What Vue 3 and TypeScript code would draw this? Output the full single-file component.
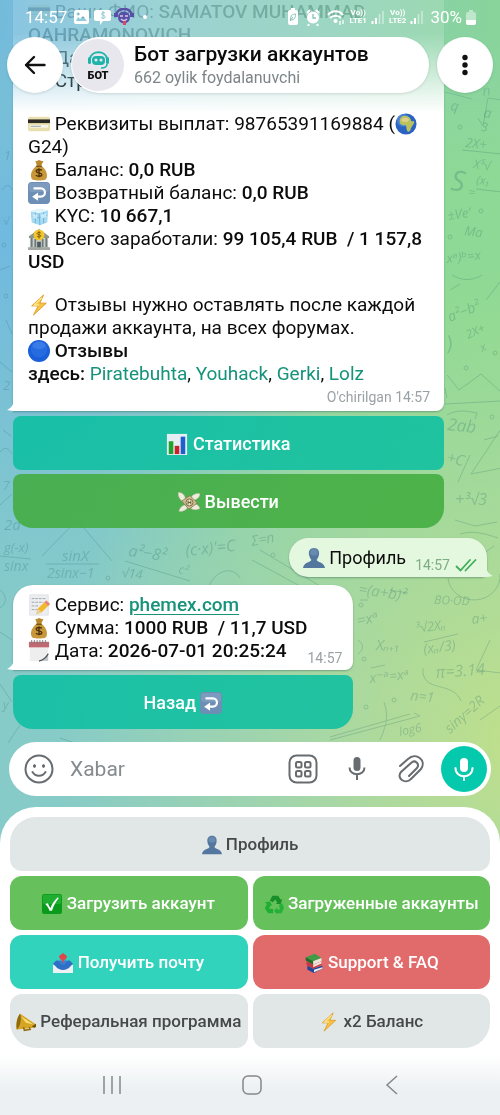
<script setup lang="ts">
import { ref } from 'vue'

interface KeyButton {
  icon: string
  label: string
  tone: 'plain' | 'green' | 'teal' | 'red'
  wide?: boolean
}

interface Doodle {
  x: number
  y: number
  r: number
  s: number
  t: string
}

const draft = ref('')

const keys: KeyButton[] = [
  { icon: 'person', label: 'Профиль', tone: 'plain', wide: true },
  { icon: 'check', label: 'Загрузить аккаунт', tone: 'green' },
  { icon: 'recycle', label: 'Загруженные аккаунты', tone: 'green' },
  { icon: 'outbox', label: 'Получить почту', tone: 'teal' },
  { icon: 'books', label: 'Support & FAQ', tone: 'red' },
  { icon: 'horn', label: 'Реферальная программа', tone: 'plain' },
  { icon: 'bolt', label: 'x2 Баланс', tone: 'plain' },
]

const reviews: string[] = ['Piratebuhta', 'Youhack', 'Gerki', 'Lolz']

const doodles: Doodle[] = [
  { x: 483, y: 96, r: -8, s: 14, t: 'n' },
  { x: 450, y: 110, r: 10, s: 14, t: 'q' },
  { x: 483, y: 117, r: 10, s: 14, t: 'a' },
  { x: 481, y: 131, r: 4, s: 12, t: '3' },
  { x: 465, y: 147, r: 6, s: 13, t: '2X+' },
  { x: 473, y: 168, r: 8, s: 12, t: 'X⁵√' },
  { x: 476, y: 184, r: 6, s: 12, t: '(x₁' },
  { x: 450, y: 190, r: 6, s: 28, t: 'S' },
  { x: 468, y: 196, r: 6, s: 12, t: '=' },
  { x: 448, y: 220, r: -8, s: 13, t: '±Ve\'' },
  { x: 464, y: 235, r: 8, s: 13, t: 'Ma' },
  { x: 447, y: 263, r: -6, s: 13, t: 'xᵃ)ᵇ=x' },
  { x: 450, y: 322, r: -22, s: 14, t: 'a²−b²' },
  { x: 468, y: 339, r: -24, s: 12, t: '2X+' },
  { x: 482, y: 352, r: -24, s: 12, t: 'x' },
  { x: 448, y: 350, r: -10, s: 20, t: ')' },
  { x: 447, y: 430, r: 6, s: 17, t: '2ab' },
  { x: 446, y: 462, r: 14, s: 15, t: '+C' },
  { x: 455, y: 505, r: 0, s: 16, t: '+³√3' },
  { x: 4, y: 160, r: 0, s: 12, t: '1' },
  { x: 3, y: 225, r: 0, s: 11, t: '√' },
  { x: 3, y: 390, r: 0, s: 13, t: '2' },
  { x: 3, y: 490, r: 0, s: 12, t: '7' },
  { x: 4, y: 530, r: 0, s: 15, t: '2a' },
  { x: 4, y: 552, r: 0, s: 13, t: 'g(-x)' },
  { x: 4, y: 571, r: 0, s: 14, t: 'sinx' },
  { x: 62, y: 561, r: 0, s: 15, t: 'sinX' },
  { x: 47, y: 578, r: 0, s: 14, t: '2sinx−1' },
  { x: 128, y: 556, r: 8, s: 16, t: 'a²−8²' },
  { x: 121, y: 577, r: 6, s: 13, t: '√14' },
  { x: 178, y: 573, r: 12, s: 12, t: 'c²' },
  { x: 186, y: 556, r: -6, s: 16, t: '(c·x)\'=C' },
  { x: 252, y: 546, r: -10, s: 14, t: 'Σ=n' },
  { x: 358, y: 594, r: 8, s: 15, t: '=(a+b)²' },
  { x: 434, y: 604, r: 2, s: 12, t: 'BO·OD' },
  { x: 358, y: 626, r: -12, s: 15, t: '=xᵃ' },
  { x: 376, y: 650, r: 0, s: 15, t: 'Xₙ₊₁' },
  { x: 416, y: 633, r: -8, s: 13, t: '³√2Xₙ' },
  { x: 424, y: 654, r: -8, s: 14, t: '(xₙ/3)' },
  { x: 472, y: 624, r: -6, s: 14, t: 'a+' },
  { x: 370, y: 683, r: -6, s: 14, t: 'x⁻ᵃ=xᵃ' },
  { x: 436, y: 678, r: -4, s: 16, t: 'π=3.14' },
  { x: 410, y: 700, r: 6, s: 14, t: 'n=1' },
  { x: 450, y: 734, r: -42, s: 14, t: 'sinγ=2R' },
  { x: 3, y: 709, r: 0, s: 12, t: 'y' },
  { x: 400, y: 736, r: -12, s: 12, t: 'log6' },
]
</script>

<template>
  <svg class="sprite" aria-hidden="true">
    <symbol id="e-card" viewBox="0 0 24 24">
      <rect x="0" y="4" width="24" height="16" rx="2" fill="#e9dfae" />
      <rect x="0" y="7" width="24" height="4" fill="#2d2a26" />
      <rect x="2" y="13" width="20" height="3" fill="#f8f6ea" />
      <path d="M3 14.500h11" stroke="#8d97a5" stroke-width="1" />
    </symbol>
    <symbol id="e-globe" viewBox="0 0 24 24">
      <circle cx="12" cy="12" r="11.500" fill="#2a63c4" />
      <circle cx="9" cy="8" r="7" fill="#5b95e0" opacity=".6" />
      <path d="M7 4c3-2 7-1 9 1l2 4h3c0 4-3 5-4 9-1 3-3 3-4 1-1-3 0-5-2-6-4 1-6-1-6-4 0-2 1-4 2-5z" fill="#b9c25f" />
      <path d="M8 6c3-2 6 0 8 1l-3 3-6-1z" fill="#e0cf8a" />
    </symbol>
    <symbol id="e-bag" viewBox="0 0 24 24">
      <path d="M8 2c2 1 3-1 4-1s3 2 5 1l-3 6h-4z" fill="#b9882f" />
      <path d="M9.500 7h5c5 4 7 9 6 13-.5 3-3 3.500-8.500 3.500S4 23 3.500 20c-1-4 1-9 6-13z" fill="#c8973a" />
      <path d="M9 8h6" stroke="#7b5415" stroke-width="1.600" />
      <path d="M15 12.500c-1-1.500-6-1.500-6 .8 0 2.400 6 1.200 6 3.800 0 2.200-5 2.200-6.300.4M12 10v10" fill="none" stroke="#4e3408" stroke-width="1.500" />
    </symbol>
    <symbol id="e-back" viewBox="0 0 24 24">
      <rect x="0" y="0" width="24" height="24" rx="4" fill="#6d8fb5" />
      <rect x="1" y="1" width="22" height="10" rx="3" fill="#8ba8c8" opacity=".5" />
      <path d="M6 7h8c6 0 6 9 0 9h-5" fill="none" stroke="#fff" stroke-width="2.400" />
      <path d="M11 11.500v9L4.500 16z" fill="#fff" />
    </symbol>
    <symbol id="e-ice" viewBox="0 0 24 24">
      <path d="M3 7l8-3 11 2-1 13-8 3-9-3z" fill="#a7d9f1" />
      <path d="M3 7l9 2 10-3-11-2z" fill="#e2f5fd" />
      <path d="M12 9l1 13M4 12l8 2 9-3M8 8v12M17 8v12" fill="none" stroke="#67b5dd" />
      <path d="M5 10l5 1v4l-5-1zM14 11l6-2v4l-6 2z" fill="#d8f1fb" opacity=".8" />
    </symbol>
    <symbol id="e-bank" viewBox="0 0 24 24">
      <path d="M1 9L12 1l11 8v2H1z" fill="#8d9488" />
      <path d="M2 11h20v11H2z" fill="#c9cec6" />
      <path d="M4 11v10M8 12v9M16 12v9M20 11v10" stroke="#6f7a80" stroke-width="2" />
      <path d="M10 15h4v7h-4z" fill="#4c5960" />
      <path d="M0 21h24v3H0z" fill="#a3a9a2" />
      <circle cx="12" cy="7.500" r="6" fill="#f1c52e" />
      <path d="M14 5.500c-1-1-4-1-4 .6 0 1.500 4 .9 4 2.400s-3 1.500-4.200.4M12 3.500v8" fill="none" stroke="#7c5b09" />
    </symbol>
    <symbol id="e-bolt" viewBox="0 0 24 24">
      <path d="M17 1L4 13h7L6 23l14-13h-7z" fill="#f6c440" stroke="#e39a2c" />
      <path d="M15 4l-8 8h5" fill="none" stroke="#fce892" stroke-width="1.500" />
    </symbol>
    <symbol id="e-blue" viewBox="0 0 24 24">
      <circle cx="12" cy="12" r="12" fill="#1a5fd8" />
      <circle cx="12" cy="10" r="9" fill="#2f74e6" opacity=".6" />
      <ellipse cx="12" cy="6" rx="7" ry="4" fill="#5b95f2" opacity=".4" />
    </symbol>
    <symbol id="e-chart" viewBox="0 0 24 24">
      <rect x="1" y="1" width="22" height="23" fill="#e7eef3" />
      <rect x="3" y="9" width="5" height="14" fill="#1ea42c" />
      <rect x="9.500" y="14" width="5" height="9" fill="#c9202b" />
      <rect x="16" y="4" width="5" height="19" fill="#1f5fcb" />
    </symbol>
    <symbol id="e-money" viewBox="0 0 24 24">
      <path d="M8 8C7 3 3 1 0 2c0 4 2 8 6 10zM15 15c5-2 8 1 9 4-3 2-7 2-10 0z" fill="#efebdd" stroke="#b9b39c" stroke-width=".6" />
      <path d="M14 8c1-4 6-6 10-5 0 4-4 7-8 7zM9 15c-4 0-7 3-8 7 4 1 7-1 10-4z" fill="#efebdd" stroke="#b9b39c" stroke-width=".6" />
      <path d="M4 11l9-6 8 8-9 7z" fill="#cdbd8f" stroke="#7d7048" stroke-width=".8" />
      <circle cx="12.500" cy="12.500" r="3.800" fill="#ece3c1" stroke="#756640" />
      <path d="M11 10.500v4M14 10.500v4M11 12.500h3" stroke="#5a4b27" />
    </symbol>
    <symbol id="e-person" viewBox="0 0 24 24">
      <path d="M12 1c4 0 6 3 5.500 7-.4 3-1.500 4.500-2.500 6 0 3 8 2 9 9H0c1-7 9-6 9-9C8 12.500 6.900 11 6.500 8 6 4 8 1 12 1z" fill="#53779f" />
      <path d="M12 2c3 0 4.500 2 4.300 5-1 3-7 3-8.600 0C7.500 4 9 2 12 2z" fill="#7798ba" opacity=".6" />
    </symbol>
    <symbol id="e-memo" viewBox="0 0 24 24">
      <rect x="2" y="1" width="20" height="22" fill="#eceef0" stroke="#cfd2d6" stroke-width=".6" />
      <path d="M4 5h15M4 9h13M4 13h8M4 17h6" stroke="#9ba0a7" stroke-dasharray="3 1" />
      <path d="M20 7l4 4-9 9-6 2 1.500-6z" fill="#f2b92d" />
      <path d="M20 7l4 4-2 2-4-4z" fill="#e98486" />
      <path d="M10.500 16L9 22l6-2z" fill="#e7cfa2" />
    </symbol>
    <symbol id="e-date" viewBox="0 0 24 24">
      <path d="M2 2h20v21H2z" fill="#eeeeef" />
      <path d="M1 2h22v6H1z" fill="#c26870" />
      <path d="M4 0v4M7 0v4M10 0v4M13 0v4M16 0v4M19 0v4" stroke="#7c7f84" stroke-width="1" />
      <path d="M22 14v9h-9c4 0 8-4 9-9z" fill="#c4c7ca" />
      <path d="M12 23c4-1 8-4 10-8" stroke="#4d5257" stroke-width="1.500" fill="none" />
    </symbol>
    <symbol id="e-check" viewBox="0 0 24 24">
      <rect width="24" height="24" rx="3" fill="#0a9a1c" />
      <rect x="1" y="1" width="22" height="11" rx="2" fill="#2fbd3d" opacity=".6" />
      <path d="M4 12l3-1 3 6c2-5 5-9 9-13l1 1c-4 5-6 9-8 15h-3c-1-3-3-6-5-8z" fill="#fff" />
    </symbol>
    <symbol id="e-recycle" viewBox="0 0 24 24">
      <path d="M7 8l3-6h7l3 5 2-1-2 6h-6l2-1.500-2.500-4L10.500 10z" fill="#188f28" />
      <path d="M1 10l6-1 3 5-2-.5-2 4 5 .5v5H5l-4-6 2.500-5z" fill="#1fae31" />
      <path d="M18 13l4-2 2 6-3 6h-5v2l-4-5 4-4v2.500h3z" fill="#26b038" />
    </symbol>
    <symbol id="e-outbox" viewBox="0 0 24 24">
      <path d="M1 13l4-4h14l4 4v6H1z" fill="#3c7fd1" />
      <path d="M0 14h6c2 5 10 5 12 0h6v10H0z" fill="#eef1f4" />
      <path d="M0 13l4-4c3 0 4 3 5 4 2 2 4 2 6 0 1-1 2-4 5-4l4 4-3 3c-5 6-13 6-18 0z" fill="#2f6fc6" />
      <path d="M12 0l5 4-2 4h-2v3h-2V8H9L7 4z" fill="#e0474b" />
    </symbol>
    <symbol id="e-books" viewBox="0 0 24 24">
      <path d="M2 5l11-4 8 5-10 4z" fill="#3f9b46" />
      <path d="M2 5l9 5v4L2 9z" fill="#216b2b" />
      <path d="M11 10l10-4v4l-10 4z" fill="#ece8dc" />
      <path d="M3 10l8 4 10-4v4l-10 5-8-5z" fill="#c43a3c" />
      <path d="M11 14l10-4v2.500L11 17z" fill="#f1e3de" />
      <path d="M4 15l7 4 11-4v4l-10 5-8-4z" fill="#24479c" />
      <path d="M12 20l10-3v2l-10 4z" fill="#eee" />
    </symbol>
    <symbol id="e-horn" viewBox="0 0 24 24">
      <path d="M5 2l19 13-2 4L1 21c-2-5 0-15 4-19z" fill="#d6a524" />
      <path d="M6 5l15 10-9-2z" fill="#f7df75" />
      <path d="M5 2C1 6 0 16 1 21c4-3 6-13 4-19z" fill="#8e6a10" />
      <path d="M9 18l1 4 7-1-1-3" fill="none" stroke="#926c10" stroke-width="1.800" />
      <path d="M24 14c1 2 0 5-2 5l-3-2z" fill="#6f510b" />
    </symbol>
  </svg>

  <div class="phone">
    <div class="stage">
      <svg class="wall" viewBox="0 0 500 844" preserveAspectRatio="xMidYMin slice" aria-hidden="true">
        <g class="wall-text">
          <text
            v-for="(d, i) in doodles"
            :key="i"
            :transform="`translate(${d.x} ${d.y}) rotate(${d.r})`"
            :font-size="d.s"
          >{{ d.t }}</text>
        </g>
        <g class="wall-lines">
          <path d="M445 92l27 7M478 118l5 8 5-28 14 2M462 150l40 4M476 189l26 3M447 375l12 15 22-16 20 18M445 404l56-3M447 415c10-6 20-4 30-2l-2 6M471 474l30-45M471 474l31-6M470 455l-12 27M0 362l12 10M0 505l12-11M46 564h53M42 556l35-36 35 41M0 556l31 3M125 561l65 20" />
          <path d="M447 398l-2-10M208 590c5-20 25-25 32-12M252 560l70 38M260 550l60 36M448 578a24 22 0 1 0 52-4M452 576l42-30M424 642l34-8M423 668c-2 26 30 12 38 33M371 668l14-3M410 714l-80 23M384 702c6 16 0 28-4 38M0 632l12 8M0 684l12 18M390 590l18 3M490 640l-14 30 25 3M330 740l90-24-6-3M280 745h80v30M20 725l-12 18M60 738l30 10M380 745l-40 14M480 720l20-14" />
          <path d="M14 364h30l6 4M50 372c10-8 20-8 28-2M100 371l12-5M180 372l20-6M486 300l14-18M450 290l10-6M452 275c10 6 20 6 30 0M484 440l14-4M455 520l20 6 22-4M460 534c14-4 26 0 38 4M6 320l6 14M2 190c4-6 8-6 10 0M0 270l10-4M3 430l8 6M0 452c6-6 8-4 12 2M0 590c8 6 6 14 0 18M360 600h8M358 640c6 4 6 10 0 14" />
          <circle cx="460" cy="127" r="2" /><circle cx="481" cy="211" r="2" /><circle cx="450" cy="237" r="2" />
          <circle cx="466" cy="368" r="2" /><circle cx="495" cy="353" r="2" /><circle cx="492" cy="417" r="2" />
          <circle cx="108" cy="578" r="2" /><circle cx="273" cy="555" r="2" /><circle cx="361" cy="605" r="2" />
          <circle cx="364" cy="659" r="2" /><circle cx="394" cy="700" r="2" /><circle cx="366" cy="707" r="2" />
          <circle cx="6" cy="296" r="2" /><circle cx="4" cy="245" r="2" />
        </g>
      </svg>

      <header class="top">
        <div class="status">
          <time class="clock">14:57</time>
          <svg class="st-left" viewBox="0 0 78 18" width="78" height="18" aria-hidden="true">
            <path d="M2 2h11q2 0 2 2v10q0 2-2 2H2q-2 0-2-2V4q0-2 2-2zM2 13h11L9 8l-3 3-2-2zM4 4.500a1.500 1.500 0 1 0 .1 0z" fill="#fff" fill-rule="evenodd" />
            <path d="M22 2h13q2 0 2 2v7q0 2-2 2h-6l-3 4v-4h-4q-2 0-2-2V4q0-2 2-2z" fill="#fff" />
            <path d="M31 5c-2-1-4 0-3 1.500s4 1 3 3-3 .5-4 0M29 3v8" fill="none" stroke="#8cc7cf" />
            <circle cx="50" cy="9.500" r="6" fill="#5a4fa8" />
            <path d="M42 7c2-8 14-8 16 0" fill="none" stroke="#5a4fa8" stroke-width="2.500" />
            <path d="M40 5h4v4h-4zM56 5h4v4h-4z" fill="#5a4fa8" />
            <path d="M46 8h3M51 8h3M47 11q3 3 6 0" stroke="#d9c9ea" stroke-width="1.500" fill="none" />
            <path d="M49 13h3v4h-3z" fill="#d6476a" />
            <circle cx="71" cy="9" r="2" fill="#fff" />
          </svg>
          <span class="grow"></span>
          <svg class="st-icons" viewBox="0 0 58 18" width="58" height="18" aria-hidden="true">
            <path d="M3 2h1V0h4v2h1q2 0 2 2v11q0 2-2 2H3q-2 0-2-2V4q0-2 2-2z" fill="#fff" />
            <path d="M3.500 12c0-5 2-6 5-6 0 4-1 6-5 6zM3 13l3-4" stroke="#86c4bc" fill="none" />
            <circle cx="26" cy="9.500" r="6" fill="#fff" />
            <path d="M20 5l3-3M32 5l-3-3M22 16l-1 2M30 16l1 2" stroke="#fff" stroke-width="2" />
            <path d="M26 6v4h3" stroke="#86c4bc" fill="none" stroke-width="1.300" />
            <path d="M41 7c4-5 11-5 15 0M43 10c3-3 8-3 11 0" stroke="#fff" fill="none" stroke-width="2" />
            <circle cx="48.500" cy="13" r="2" fill="#fff" />
            <path d="M53 17v-4M56 12v4" stroke="#fff" stroke-width="1.300" />
          </svg>
          <span class="sim"><span>Vo))</span><span>LTE1</span></span>
          <svg class="bars" viewBox="0 0 14 14" width="14" height="14" aria-hidden="true">
            <path d="M1.500 11v3M5 8v6" stroke="#fff" stroke-width="2" /><path d="M8.500 4v10M12 1v13" stroke="#fff" stroke-width="1.500" opacity=".5" />
          </svg>
          <span class="sim"><span>Vo))</span><span>LTE2</span></span>
          <svg class="bars" viewBox="0 0 14 14" width="14" height="14" aria-hidden="true">
            <path d="M1.500 11v3M5 8v6" stroke="#fff" stroke-width="2" /><path d="M8.500 4v10M12 1v13" stroke="#fff" stroke-width="1.500" opacity=".5" />
          </svg>
          <span class="charge">30%</span>
          <svg viewBox="0 0 10 15" width="10" height="15" aria-hidden="true">
            <path d="M2 2h1V0h4v2h1q2 0 2 2v6H0V4q0-2 2-2z" fill="#fff" opacity=".45" />
            <path d="M0 10h10v3q0 2-2 2H2q-2 0-2-2z" fill="#fff" />
          </svg>
        </div>

        <div class="bar">
          <button class="round" type="button" aria-label="Orqaga">
            <svg viewBox="0 0 24 24" width="24" height="24" fill="none" stroke="#111" stroke-width="2.400" stroke-linecap="round" stroke-linejoin="round"><path d="M21.500 12H3M11 4l-8 8 8 8" /></svg>
          </button>
          <div class="title">
            <svg class="avatar" viewBox="0 0 52 52" width="52" height="52" role="img" aria-label="БОТ">
              <circle cx="26" cy="26" r="26" fill="#e9e7ee" />
              <path d="M18 20c1-9 16-9 17 0" fill="none" stroke="#1fb3ab" stroke-width="2" />
              <rect x="16" y="18" width="3" height="7" rx="1.500" fill="#1fb3ab" />
              <rect x="34" y="18" width="3" height="7" rx="1.500" fill="#1fb3ab" />
              <rect x="20" y="17" width="13" height="9" rx="4" fill="#1fb3ab" />
              <circle cx="24" cy="21" r="1.500" fill="#e9e7ee" /><circle cx="29" cy="21" r="1.500" fill="#e9e7ee" />
              <path d="M35 25c0 3-3 4-6 4" fill="none" stroke="#1fb3ab" stroke-width="1.500" />
              <text x="26" y="40" text-anchor="middle" class="bot">БОТ</text>
            </svg>
            <div class="names">
              <h1>Бот загрузки аккаунтов</h1>
              <p>662 oylik foydalanuvchi</p>
            </div>
          </div>
          <button class="round" type="button" aria-label="Menyu">
            <svg viewBox="0 0 24 24" width="24" height="24" fill="#111"><circle cx="12" cy="4.500" r="2.700" /><circle cx="12" cy="12" r="2.700" /><circle cx="12" cy="19.500" r="2.700" /></svg>
          </button>
        </div>
      </header>

      <main class="chat">
        <section class="group wide">
          <article class="bubble in first">
            <p>
              <svg class="emoji"><use href="#e-card" /></svg> Ваши ФИО: <b>SAMATOV MUHAMMAD QAHRAMONOVICH</b><br />
              <svg class="emoji"><use href="#e-date" /></svg> Да<br />
              <svg class="emoji"><use href="#e-blue" /></svg> Стр
            </p>
            <p>
              <svg class="emoji"><use href="#e-card" /></svg> Реквизиты выплат: 98765391169884 (<svg class="emoji"><use href="#e-globe" /></svg><br />G24)<br />
              <svg class="emoji"><use href="#e-bag" /></svg> Баланс: <b>0,0 RUB</b><br />
              <svg class="emoji"><use href="#e-back" /></svg> Возвратный баланс: <b>0,0 RUB</b><br />
              <svg class="emoji"><use href="#e-ice" /></svg> KYC: <b>10 667,1</b><br />
              <svg class="emoji"><use href="#e-bank" /></svg> Всего заработали: <b>99 105,4 RUB&nbsp; / 1 157,8 USD</b>
            </p>
            <p>
              <svg class="emoji"><use href="#e-bolt" /></svg> Отзывы нужно оставлять после каждой продажи аккаунта, на всех форумах.<br />
              <svg class="emoji"><use href="#e-blue" /></svg> <b>Отзывы<br />здесь:</b>
              <template v-for="(name, i) in reviews" :key="name">{{ ' ' }}<a href="#">{{ name }}</a><template v-if="i < reviews.length - 1">,</template></template>
            </p>
            <footer class="meta">O'chirilgan 14:57</footer>
            <svg class="tail" viewBox="0 0 14 16" aria-hidden="true"><path d="M7 0v4c0 6-3 9-7 11 3 1 8 1 14 1V0z" fill="#fff" /></svg>
          </article>
          <button class="inline teal" type="button"><svg class="emoji"><use href="#e-chart" /></svg> Статистика</button>
          <button class="inline green last" type="button"><svg class="emoji"><use href="#e-money" /></svg> Вывести</button>
        </section>

        <article class="bubble out">
          <p><svg class="emoji"><use href="#e-person" /></svg> Профиль</p>
          <span class="meta">14:57</span>
          <svg class="ticks" viewBox="0 0 22 14" width="22" height="14" fill="none" stroke="#3fae57" stroke-width="1.800" stroke-linecap="round" aria-hidden="true"><path d="M1.500 8.500l4 4L15 2M10.500 12.500L20.500 2" /></svg>
          <svg class="tail right" viewBox="0 0 14 16" aria-hidden="true"><path d="M7 0v4c0 6 3 9 7 11-3 1-8 1-14 1V0z" fill="#e4f7df" /></svg>
        </article>

        <section class="group narrow">
          <article class="bubble in second">
            <p>
              <svg class="emoji"><use href="#e-memo" /></svg> Сервис: <a class="site" href="#">phemex.com</a><br />
              <svg class="emoji"><use href="#e-bag" /></svg> Сумма: <b>1000 RUB&nbsp; / 11,7 USD</b><br />
              <svg class="emoji"><use href="#e-date" /></svg> Дата: <b>2026-07-01 20:25:24</b>
            </p>
            <span class="meta">14:57</span>
            <svg class="tail" viewBox="0 0 14 16" aria-hidden="true"><path d="M7 0v4c0 6-3 9-7 11 3 1 8 1 14 1V0z" fill="#fff" /></svg>
          </article>
          <button class="inline teal last" type="button">Назад <svg class="emoji"><use href="#e-back" /></svg></button>
        </section>
      </main>

      <form class="composer" @submit.prevent>
        <button class="tool" type="button" aria-label="Emoji">
          <svg viewBox="0 0 30 30" width="30" height="30" fill="none" stroke="#676c70" stroke-width="2"><circle cx="15" cy="15" r="13.500" /><ellipse cx="10.500" cy="12" rx="1" ry="1.500" fill="#676c70" stroke-width="1" /><ellipse cx="19.500" cy="12" rx="1" ry="1.500" fill="#676c70" stroke-width="1" /><path d="M8.500 18c3 5 10 5 13 0" stroke-linecap="round" /></svg>
        </button>
        <input v-model="draft" type="text" placeholder="Xabar" aria-label="Xabar" />
        <button class="tool" type="button" aria-label="Klaviatura">
          <svg viewBox="0 0 30 30" width="30" height="30" fill="none" stroke="#676c70" stroke-width="2"><rect x="1.500" y="1.500" width="27" height="27" rx="7" /><rect x="8" y="8" width="5.500" height="5.500" rx="1.500" /><rect x="17" y="8" width="5.500" height="5.500" rx="1.500" /><rect x="8" y="17" width="5.500" height="5.500" rx="1.500" /><rect x="17" y="17" width="5.500" height="5.500" rx="1.500" /></svg>
        </button>
        <button class="tool" type="button" aria-label="Diktovka">
          <svg viewBox="0 0 30 30" width="30" height="30" fill="none" stroke="#676c70" stroke-width="2"><rect x="11.500" y="3" width="7" height="14" rx="3.500" fill="#676c70" stroke="none" /><path d="M7.500 13.500c0 9 15 9 15 0M15 20v6" /></svg>
        </button>
        <button class="tool" type="button" aria-label="Fayl">
          <svg viewBox="0 0 30 30" width="30" height="30" fill="none" stroke="#676c70" stroke-width="2" stroke-linecap="round"><path d="M4 12l8-7c8-7 19 1 13 10L15 25c-6 6-15-1-10-7L15 9c4-4 9 1 6 5l-8 8" /></svg>
        </button>
        <button class="mic" type="button" aria-label="Ovozli xabar">
          <svg viewBox="0 0 24 24" width="24" height="24" fill="none" stroke="#fff" stroke-width="2" stroke-linecap="round"><rect x="8" y="1" width="8" height="14" rx="4" fill="#fff" stroke="none" /><path d="M3.500 11c0 11 17 11 17 0M12 19v4" /></svg>
        </button>
      </form>
    </div>

    <section class="keyboard">
      <button
        v-for="k in keys"
        :key="k.label"
        type="button"
        class="key"
        :class="[k.tone, { whole: k.wide }]"
      ><svg class="emoji"><use :href="`#e-${k.icon}`" /></svg> {{ k.label }}</button>
    </section>

    <nav class="system">
      <button type="button" aria-label="Oxirgilar"><svg viewBox="0 0 20 20" width="20" height="20" fill="none" stroke="#85888b" stroke-width="1.500"><path d="M2 1v18M10 1v18M18 1v18" /></svg></button>
      <button type="button" aria-label="Bosh ekran"><svg viewBox="0 0 20 20" width="20" height="20" fill="none" stroke="#85888b" stroke-width="1.500"><rect x="1" y="1" width="18" height="18" rx="5" /></svg></button>
      <button type="button" aria-label="Ortga"><svg viewBox="0 0 20 20" width="20" height="20" fill="none" stroke="#85888b" stroke-width="1.500"><path d="M15 1l-10 9 10 9" /></svg></button>
    </nav>
  </div>
</template>

<style>
body {
  margin: 0;
  background: #fff;
}
</style>

<style scoped>
* {
  box-sizing: border-box;
}
button {
  margin: 0;
  padding: 0;
  border: 0;
  background: none;
  font: inherit;
  color: inherit;
  cursor: pointer;
}
p,
h1 {
  margin: 0;
}
.sprite {
  position: absolute;
  width: 0;
  height: 0;
}
.phone {
  min-height: 100vh;
  display: flex;
  flex-direction: column;
  font-family: Roboto, "Liberation Sans", sans-serif;
  font-size: 18px;
  line-height: 23px;
  color: #0c0c0c;
  background: #fff;
}
.stage {
  position: relative;
  flex: 1;
  display: flex;
  flex-direction: column;
  padding-bottom: 47px;
  background:
    radial-gradient(circle at 105% 88%, #c0e08a 0, rgba(192, 224, 138, 0) 52%),
    radial-gradient(circle at 0% 28%, #70b9e0 0, rgba(112, 185, 224, 0) 48%),
    radial-gradient(circle at 100% 30%, #8ed995 10%, rgba(142, 217, 149, 0) 68%),
    #86cbc8;
}
.wall {
  position: absolute;
  inset: 0;
  width: 100%;
  height: 100%;
}
.wall-text {
  font-family: "Open Sans", "DejaVu Sans", sans-serif;
  font-style: italic;
  fill: #2b6f6a;
  opacity: 0.26;
}
.wall-lines {
  fill: none;
  stroke: #2b6f6a;
  stroke-width: 1;
  opacity: 0.24;
}
.top {
  position: absolute;
  inset: 0 0 auto;
  z-index: 2;
  padding: 6px 7px 20px;
}
.top::before {
  content: "";
  position: absolute;
  inset: 0;
  background: linear-gradient(90deg, #72b9dd, #88c9cd 30%, #8acfb4 70%, #88d498);
  mask-image: linear-gradient(rgba(0, 0, 0, 0.84) 30%, transparent);
}
.status {
  position: relative;
  display: flex;
  align-items: center;
  height: 22px;
  padding: 0 17px 0 18px;
  gap: 4px;
  color: #fff;
  font-size: 17px;
}
.st-left {
  margin-left: 3px;
}
.grow {
  flex: 1;
}
.sim {
  display: flex;
  flex-direction: column;
  align-items: center;
  font-size: 8px;
  line-height: 8px;
  font-weight: 700;
}
.charge {
  margin-left: 2px;
}
.bar {
  position: relative;
  display: flex;
  gap: 8px;
  margin-top: 9px;
}
.round {
  flex: none;
  display: grid;
  place-items: center;
  width: 56px;
  height: 56px;
  border-radius: 50%;
  background: #fff;
  box-shadow: 0 1px 3px rgba(0, 0, 0, 0.12);
}
.title {
  flex: 1;
  min-width: 0;
  display: flex;
  align-items: center;
  gap: 10px;
  height: 56px;
  padding-left: 1px;
  border-radius: 28px;
  background: #fff;
  box-shadow: 0 1px 3px rgba(0, 0, 0, 0.12);
}
.avatar {
  flex: none;
}
.bot {
  font: 900 11px Roboto, sans-serif;
  fill: #111;
}
.names {
  min-width: 0;
  white-space: nowrap;
}
.names h1 {
  font-size: 21px;
  line-height: 25px;
  font-weight: 500;
}
.names p {
  font-size: 16px;
  line-height: 22px;
  color: #7d8588;
}
.chat {
  position: relative;
  flex: 1;
  display: flex;
  flex-direction: column;
  padding: 0 13px;
}
.group {
  display: flex;
  flex-direction: column;
  gap: 4px;
}
.wide {
  margin-right: 43px;
}
.narrow {
  align-self: flex-start;
  width: 340px;
  max-width: 100%;
}
.bubble {
  position: relative;
  background: #fff;
  box-shadow: 0 1px 2px rgba(0, 40, 40, 0.3);
}
.in {
  font-size: 19px;
}
.bubble b,
.site {
  font-weight: 500;
}
.first {
  padding: 0 10px 6px 15px;
  border-radius: 0 0 8px 0;
  margin-bottom: 1px;
}
.first p + p {
  margin-top: 20px;
}
.emoji {
  width: 22px;
  height: 22px;
  vertical-align: -5px;
}
a {
  color: #16937a;
  text-decoration: none;
}
.site {
  text-decoration: underline;
  text-underline-offset: 3px;
}
.meta {
  font-size: 14px;
  line-height: 16px;
  color: #9aa1a5;
  text-align: right;
}
.first .meta {
  margin-top: 4px;
  padding-right: 4px;
}
.tail {
  position: absolute;
  left: -6px;
  bottom: 0;
  width: 14px;
  height: 16px;
}
.tail.right {
  left: auto;
  right: -6px;
}
.inline {
  height: 54px;
  border-radius: 8px;
  color: #fff;
  font-weight: 500;
}
.inline.teal {
  background: rgba(9, 190, 160, 0.85);
}
.inline.green {
  background: rgba(66, 172, 64, 0.88);
}
.inline.last {
  border-radius: 8px 8px 20px 20px;
}
.out {
  align-self: flex-end;
  display: flex;
  align-items: center;
  height: 39px;
  margin: 10px 0 8px;
  padding: 0 10px 0 14px;
  border-radius: 20px 20px 6px 20px;
  background: #e4f7df;
}
.out .meta {
  align-self: flex-end;
  margin: 0 5px 4px 9px;
  color: #7dae83;
}
.ticks {
  align-self: flex-end;
  margin-bottom: 5px;
}
.second {
  display: flex;
  justify-content: space-between;
  align-items: flex-end;
  padding: 8px 12px 8px 15px;
  margin-bottom: 1px;
  border-radius: 20px 20px 8px 0;
  white-space: nowrap;
}
.second .meta {
  margin-bottom: -4px;
}
.composer {
  position: relative;
  display: flex;
  align-items: center;
  height: 54px;
  margin: 13px 9px 0;
  padding: 0 4px 0 15px;
  border-radius: 27px;
  background: #fff;
}
.composer input {
  flex: 1;
  min-width: 0;
  margin: 0;
  padding: 0 0 0 16px;
  border: 0;
  outline: 0;
  background: none;
  font: inherit;
  font-size: 21px;
}
.composer input::placeholder {
  color: #868b8e;
  opacity: 1;
}
.tool {
  flex: none;
  height: 30px;
  margin-right: 24px;
}
.tool:first-child {
  margin-right: 0;
}
.tool:nth-last-child(2) {
  margin-right: 15px;
}
.mic {
  flex: none;
  display: grid;
  place-items: center;
  width: 46px;
  height: 46px;
  border-radius: 50%;
  background: #05c9ac;
}
.keyboard {
  position: relative;
  display: grid;
  grid-template-columns: 1fr 1fr;
  gap: 5px;
  margin-top: -36px;
  padding: 10px 10px 7px;
  border-radius: 36px 36px 0 0;
  background: #fff;
}
.key {
  height: 54px;
  border-radius: 12px;
  font-size: 17px;
  font-weight: 500;
  color: #fff;
  white-space: nowrap;
}
.key .emoji {
  width: 20px;
  height: 20px;
  vertical-align: -5px;
}
.key.plain {
  background: #e1e6e6;
  color: #45494c;
}
.key.green {
  background: #66c15c;
}
.key.teal {
  background: #32d3bc;
}
.key.red {
  background: #e16a6b;
}
.key.whole {
  grid-column: 1 / -1;
  border-radius: 26px 26px 12px 12px;
}
.key:nth-child(6) {
  border-bottom-left-radius: 26px;
}
.key:nth-child(7) {
  border-bottom-right-radius: 26px;
}
.system {
  display: grid;
  grid-template-columns: repeat(3, 1fr);
  align-items: center;
  height: 60px;
  padding: 0 38px 0 42px;
  background: linear-gradient(#fff, #ecf0f2 60%);
}
.system button {
  height: 20px;
}
</style>
